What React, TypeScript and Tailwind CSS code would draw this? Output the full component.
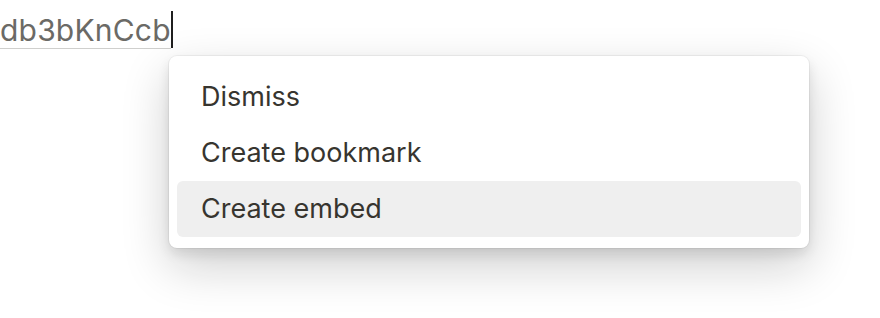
export default function App() {
  const items = ['Dismiss', 'Create bookmark', 'Create embed'];
  const active = 2;

  return (
    <div className="relative w-[880px] h-[318px] overflow-hidden bg-white font-['Inter','Liberation_Sans',sans-serif]">
      {/* Pasted link text with caret */}
      <div className="flex items-start pt-[12px]">
        <span className="text-[30px] leading-[36px] text-[#6b6a66] border-b-[1.5px] border-[#cfcfcd] tracking-[0.2px]">
          db3bKnCcb
        </span>
        <span className="w-[2px] h-[37px] bg-[#1f1f1f] mt-[-1px]" />
      </div>

      {/* Paste menu */}
      <div className="absolute left-[169px] top-[56px] w-[640px] rounded-[8px] bg-white pt-[13px] pb-[11px] shadow-[0_0_0_1px_rgba(15,15,15,0.05),0_6px_12px_rgba(15,15,15,0.1),0_18px_48px_rgba(15,15,15,0.2)]">
        {items.map((item, i) => (
          <div
            key={item}
            className={
              i === active
                ? 'mx-[8px] h-[56px] flex items-center px-[24px] rounded-[6px] bg-[#efefef] text-[27px] text-[#37352f]'
                : 'mx-[8px] h-[56px] flex items-center px-[24px] rounded-[6px] text-[27px] text-[#37352f]'
            }
          >
            {item}
          </div>
        ))}
      </div>
    </div>
  );
}
